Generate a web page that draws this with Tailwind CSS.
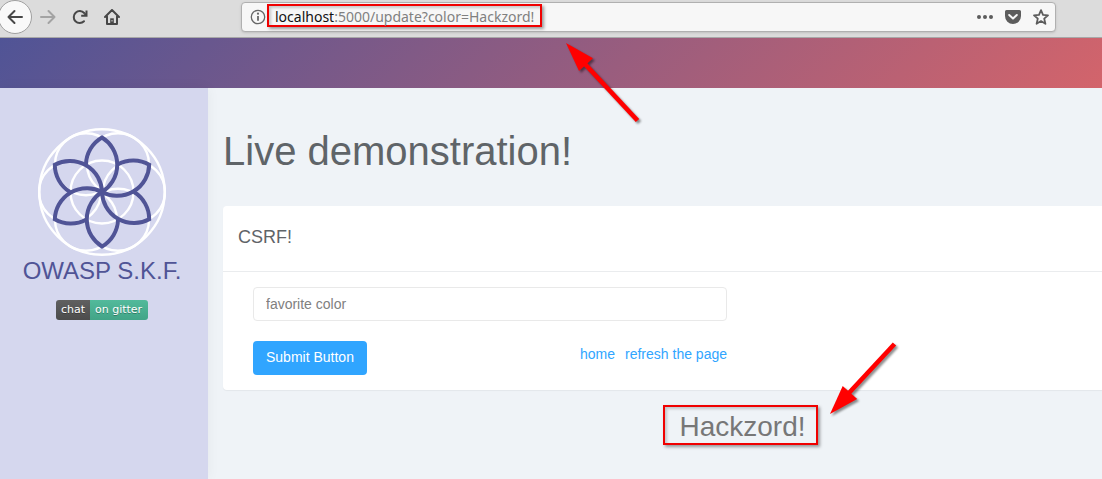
<!DOCTYPE html>
<html lang="en">
<head>
<meta charset="utf-8">
<meta name="viewport" content="width=device-width, initial-scale=1">
<title>OWASP S.K.F. - CSRF</title>
<script src="https://cdn.jsdelivr.net/npm/@tailwindcss/browser@4"></script>
</head>
<body class="relative flex min-h-screen flex-col overflow-x-hidden bg-[#eff3f7] font-['Liberation_Sans',Arial,sans-serif] text-sm text-[#5f6468]">

<!-- Browser toolbar -->
<div class="flex h-[38px] shrink-0 items-start border-b border-[#a8a8a8] bg-[#dcdcdc] text-[#474747]">
  <button type="button" aria-label="Back" class="-ml-0.5 flex size-[34px] items-center justify-center rounded-full border border-[#a0a0a0] bg-[#f9f9f9]">
    <svg class="size-4" viewBox="0 0 16 16" fill="none" stroke="currentColor" stroke-width="2" stroke-linecap="round" stroke-linejoin="round"><path d="M15 8H1.500M7.500 2 1.500 8l6 6"/></svg>
  </button>
  <button type="button" aria-label="Forward" class="ml-2 flex h-[34px] w-4 items-center justify-center text-[#a3a3a3]">
    <svg class="size-4" viewBox="0 0 16 16" fill="none" stroke="currentColor" stroke-width="2" stroke-linecap="round" stroke-linejoin="round"><path d="M1 8h13.500M8.500 2l6 6-6 6"/></svg>
  </button>
  <button type="button" aria-label="Reload" class="ml-4 flex h-[34px] w-4 items-center justify-center">
    <svg class="size-4" viewBox="0 0 16 16"><path d="M12 12.300A6 6 0 1 1 12.200 4" fill="none" stroke="currentColor" stroke-width="2" stroke-linecap="round"/><path d="M14.500 1.500V6.800H9.200" fill="none" stroke="currentColor" stroke-width="2"/><path d="M14.500 3v4h-4z" fill="currentColor"/></svg>
  </button>
  <button type="button" aria-label="Home" class="ml-4 flex h-[34px] w-4 items-center justify-center">
    <svg class="size-4" viewBox="0 0 16 16" fill="none" stroke="currentColor" stroke-width="2" stroke-linejoin="round" stroke-linecap="round"><path d="M1 8l7-7 7 7M3 7.500V15h10V7.500"/><path d="M6.200 15V9.300h3.600V15z" fill="currentColor" stroke="none"/><path d="M8 11v1.500" stroke="#dcdcdc" stroke-width="1" stroke-linecap="butt"/></svg>
  </button>
  <div class="mr-[46px] ml-[121px] mt-0.5 flex h-[30px] flex-1 items-center rounded-[4px] border border-[#b0b0b0] bg-[#f7f7f7] pr-1.5 pl-2 text-[#5c5c5c] shadow-sm">
    <svg class="size-4 shrink-0" viewBox="0 0 16 16" fill="none" stroke="#666" stroke-width="1.300"><circle cx="8" cy="8" r="6.700"/><path d="M8 7v4.800" stroke-width="1.800"/><circle cx="8" cy="4.700" r="1.100" fill="#666" stroke="none"/></svg>
    <div class="-mt-1 ml-px flex h-[23px] w-[275px] items-center border-2 border-[#f00000] pt-[3px] pl-1.5 font-['Noto_Sans',sans-serif] text-sm text-[#808080] shadow-[2px_2px_3px_#00000060,inset_2px_2px_3px_#00000030]"><span class="text-[#111]">localhost</span>:5000/update?color=Hackzord!</div>
    <button type="button" aria-label="Page actions" class="ml-auto"><svg class="size-4" viewBox="0 0 16 16" fill="currentColor"><circle cx="2" cy="8" r="2"/><circle cx="8" cy="8" r="2"/><circle cx="14" cy="8" r="2"/></svg></button>
    <button type="button" aria-label="Save to Pocket" class="ml-3"><svg class="size-4" viewBox="0 0 16 16"><path d="M1.500 1h13A1.500 1.500 0 0 1 16 2.500V7A8 8 0 0 1 0 7V2.500A1.500 1.500 0 0 1 1.500 1z" fill="currentColor"/><path d="M4.200 6 8 9.600 11.800 6" fill="none" stroke="#f7f7f7" stroke-width="2" stroke-linecap="round" stroke-linejoin="round"/></svg></button>
    <button type="button" aria-label="Bookmark" class="ml-3"><svg class="size-4" viewBox="0 0 16 16" fill="none" stroke="currentColor" stroke-width="1.800" stroke-linejoin="round"><path d="M8 1.200l2 4.600 5 .5-3.800 3.300 1.200 5.200L8 12.100l-4.400 2.700 1.200-5.200L1 6.300l5-.5z"/></svg></button>
  </div>
</div>

<!-- Page banner -->
<header class="h-[50px] shrink-0 bg-[linear-gradient(135deg,#505496,#d3646b)]"></header>

<div class="flex flex-1">
  <aside class="flex w-52 shrink-0 flex-col items-center bg-[#d5d7ee] pt-10 pr-1 shadow-[0_0_12px_#0000000d]">
    <svg class="size-32" viewBox="-64 -64 128 128" fill="none" role="img" aria-label="OWASP S.K.F. logo">
      <g stroke="#fff" stroke-width="2.400">
        <circle r="62.700"/>
        <circle r="31.500"/>
        <circle cx="32" r="31"/><circle cx="16" cy="27.700" r="31"/><circle cx="-16" cy="27.700" r="31"/>
        <circle cx="-32" r="31"/><circle cx="-16" cy="-27.700" r="31"/><circle cx="16" cy="-27.700" r="31"/>
      </g>
      <g stroke="#505496" stroke-width="4" stroke-linejoin="miter">
        <path id="petal" d="M-16-27.700A32 32 0 0 1 0-54.500 32 32 0 0 1 0 0"/>
        <use href="#petal" transform="rotate(60)"/><use href="#petal" transform="rotate(120)"/><use href="#petal" transform="rotate(180)"/>
        <use href="#petal" transform="rotate(240)"/><use href="#petal" transform="rotate(300)"/>
      </g>
    </svg>
    <p class="text-2xl leading-[30px] text-[#505496]">OWASP S.K.F.</p>
    <a href="#" class="mt-3.5 flex h-5 overflow-hidden rounded-[3px] font-['DejaVu_Sans',sans-serif] text-[11px] leading-5 text-white [text-shadow:0_1px_0_#0000004d]">
      <span class="bg-linear-to-b from-[#606060] to-[#4c4c4c] px-[5px]">chat</span><span class="bg-linear-to-b from-[#52ba9b] to-[#42a487] pr-1.5 pl-[5px]">on gitter</span>
    </a>
  </aside>

  <main class="min-w-0 flex-1 pt-10 pl-[15px]">
    <h1 class="text-[40px] leading-[46px]">Live demonstration!</h1>
    <section class="mt-8 rounded-l-[4px] bg-white shadow-[0_1px_1px_#0000000d]">
      <h2 class="h-[66px] border-b border-[#eaecee] px-[15px] pt-[19px] text-lg leading-6">CSRF!</h2>
      <form class="w-[504px] max-w-full pt-[15px] pb-[15px] pl-[30px]">
        <input type="text" aria-label="favorite color" placeholder="favorite color" class="block h-[34px] w-full rounded-[4px] border border-[#e9e9e9] bg-white px-3 text-sm placeholder:text-[#808080]">
        <div class="mt-5 flex items-start justify-between">
          <button type="button" class="h-[34px] rounded-[4px] bg-[#30a5ff] px-[13px] pb-0.5 text-sm text-white">Submit Button</button>
          <nav class="flex gap-2.5 pt-[3px] leading-5 text-[#30a5ff]"><a href="#">home</a><a href="#">refresh the page</a></nav>
        </div>
      </form>
    </section>
    <p class="mt-[15px] ml-[50%] h-10 w-[155px] border-2 border-[#f00000] pl-[15px] text-[28px] leading-10 text-[#777] shadow-[2px_2px_3px_#00000060,inset_2px_2px_3px_#00000030]">Hackzord!</p>
  </main>
</div>

<!-- Annotation arrows floating over the page -->
<svg class="pointer-events-none absolute top-[42px] left-[564px] h-[84px] w-[84px] drop-shadow-[2px_2px_1px_#00000070]" viewBox="564 42 84 84" fill="red" stroke="red" aria-hidden="true"><path d="M566 43l27 15.300-14 12.700z" stroke="none"/><path d="M584 63l53.500 57.500" stroke-width="4.700"/></svg>
<svg class="pointer-events-none absolute top-[340px] left-[826px] h-[84px] w-[76px] drop-shadow-[2px_2px_1px_#00000070]" viewBox="826 340 76 84" fill="red" stroke="red" aria-hidden="true"><path d="M830 414l12.700-28 14.500 13z" stroke="none"/><path d="M848 394l46.500-50" stroke-width="4.700"/></svg>
</body>
</html>
